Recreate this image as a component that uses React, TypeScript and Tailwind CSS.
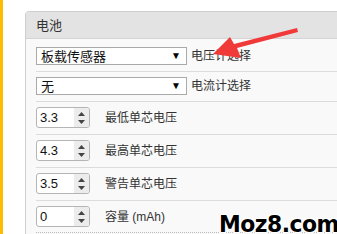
import React from "react";

const font = { fontFamily: '"Liberation Sans", "Noto Sans CJK SC", sans-serif' };

function SelectRow({ value, label }: { value: string; label: string }) {
  return (
    <div className="flex items-center h-[18px]">
      <div className="w-[151px] h-[18px] border border-[#a9a9a9] bg-white flex items-center justify-between pl-[4px] pr-[5px]">
        <span className="text-[13px] leading-none text-[#111]">{value}</span>
        <span className="text-[10px] leading-none text-black">▼</span>
      </div>
      <span className="ml-[4px] text-[12px] leading-none text-[#333]">{label}</span>
    </div>
  );
}

function NumberRow({ value, label }: { value: string; label: string }) {
  return (
    <div className="flex items-center h-[21px]">
      <div className="w-[54px] h-[21px] border border-[#b5b5b5] rounded-[3px] bg-white flex overflow-hidden">
        <div className="flex-1 flex items-center pl-[3px] text-[13px] leading-none text-[#111]">{value}</div>
        <div className="w-[15px] bg-[#ececec] flex flex-col items-center justify-center gap-[4px]">
          <svg width="7" height="4" viewBox="0 0 7 4"><path d="M0 4 L3.5 0 L7 4 Z" fill="#444" /></svg>
          <svg width="7" height="4" viewBox="0 0 7 4"><path d="M0 0 L3.5 4 L7 0 Z" fill="#444" /></svg>
        </div>
      </div>
      <span className="ml-[15px] text-[12px] leading-none text-[#333]">{label}</span>
    </div>
  );
}

export default function App() {
  return (
    <div className="relative w-[337px] h-[234px] overflow-hidden bg-white flex" style={font}>
      <div className="w-[3px] h-full bg-[#ffbb00]" />
      <div className="flex-1 pl-[22px] pt-[11px]">
        <div className="border-l border-t border-[#cfcfcf] rounded-tl-[4px] h-full bg-[#f9f9f9]">
          <div className="h-[27px] bg-[#e3e3e3] border-b border-[#d4d4d4] flex items-center pl-[10px]">
            <span className="text-[13px] leading-none text-[#333]">电池</span>
          </div>
          <div className="pl-[10px] pt-[8px]">
            <div className="pb-[6px]"><SelectRow value="板载传感器" label="电压计选择" /></div>
            <div className="border-t border-[#dcdcdc] pt-[5px] pb-[6px]"><SelectRow value="无" label="电流计选择" /></div>
            <div className="border-t border-[#dcdcdc] pt-[5px] pb-[6px]"><NumberRow value="3.3" label="最低单芯电压" /></div>
            <div className="border-t border-[#dcdcdc] pt-[5px] pb-[6px]"><NumberRow value="4.3" label="最高单芯电压" /></div>
            <div className="border-t border-[#dcdcdc] pt-[5px] pb-[6px]"><NumberRow value="3.5" label="警告单芯电压" /></div>
            <div className="border-t border-[#dcdcdc] pt-[5px] pb-[5px]"><NumberRow value="0" label="容量 (mAh)" /></div>
            <div className="border-t border-dotted border-[#bbb]" />
          </div>
        </div>
      </div>
      <svg className="absolute left-0 top-0 pointer-events-none" width="337" height="234">
        <polygon points="297,28 298,32 237,48 241,58 213,54 230,37 234,44" fill="#f03a3a" />
      </svg>
      <div
        className="absolute left-[219px] top-[213px] text-[23px] font-black leading-none text-black tracking-[-0.5px] scale-x-[0.95] origin-left"
        style={{ fontFamily: '"DejaVu Sans", sans-serif', textShadow: "1px 1px 0 #fff, -1px -1px 0 #fff, 1px -1px 0 #fff, -1px 1px 0 #fff, 0 1px 0 #fff, 1px 0 0 #fff, 0 -1px 0 #fff, -1px 0 0 #fff" }}
      >
        Moz8.com
      </div>
    </div>
  );
}
